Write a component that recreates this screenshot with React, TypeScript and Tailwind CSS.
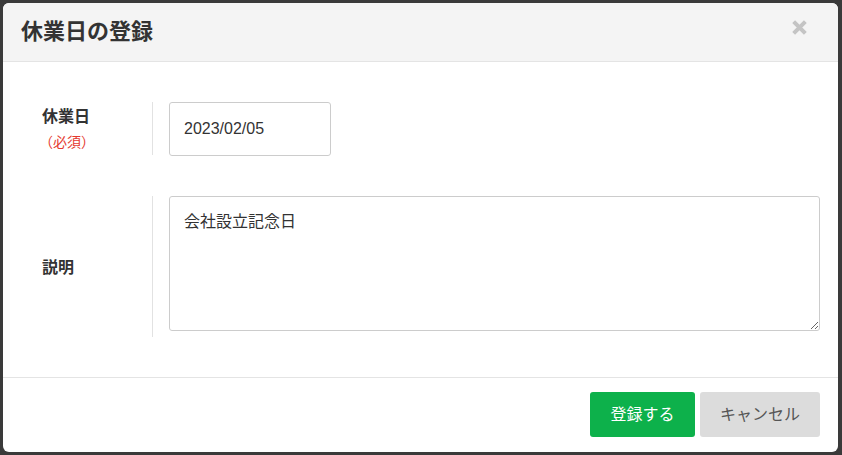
import React from "react";

const font = { fontFamily: '"Liberation Sans", "Noto Sans CJK JP", sans-serif' };

export default function App() {
  return (
    <div
      className="w-[842px] h-[455px] bg-[#3a3a3a] pt-[3px] pl-[3px] overflow-hidden"
      style={font}
    >
      <div className="w-[835px] h-[449px] bg-white rounded-[6px] flex flex-col overflow-hidden">
        <div className="h-[59px] shrink-0 bg-[#f4f4f4] border-b border-[#e4e4e4] flex items-center justify-between pl-[18px] pr-[30px]">
          <h1 className="text-[22px] font-bold text-[#333] leading-none">休業日の登録</h1>
          <svg width="17" height="17" viewBox="0 0 16 16" className="mt-[-10px]">
            <path d="M2.5 2.5 L13.5 13.5 M13.5 2.5 L2.5 13.5" stroke="#c4c4c4" strokeWidth="3.8" />
          </svg>
        </div>

        <div className="flex flex-col pt-[40px] pb-[40px] gap-[41px] border-b border-[#e4e4e4]">
          <div className="flex h-[53px]">
            <div className="w-[149px] shrink-0 flex flex-col justify-center pl-[39px] pt-[1px]">
              <span className="text-[16px] font-bold text-[#333] leading-[22px]">休業日</span>
              <span className="text-[14px] text-[#e53a2f] leading-[20px] ml-[-3px] mt-[4px]">（必須）</span>
            </div>
            <div className="border-l border-[#e2e2e2] pl-[16px]">
              <div className="w-[162px] h-[54px] border border-[#cccccc] rounded-[3px] flex items-center pl-[14px] text-[16px] text-[#333]">
                2023/02/05
              </div>
            </div>
          </div>

          <div className="flex h-[141px]">
            <div className="w-[149px] shrink-0 flex items-center pl-[39px] pt-[2px]">
              <span className="text-[16px] font-bold text-[#333] leading-[22px]">説明</span>
            </div>
            <div className="border-l border-[#e2e2e2] pl-[16px] flex-1 pr-[18px]">
              <textarea
                className="block w-full h-[135px] border border-[#cccccc] rounded-[3px] px-[14px] pt-[13px] text-[16px] leading-[24px] text-[#333] outline-none"
                style={font}
                defaultValue="会社設立記念日"
              />
            </div>
          </div>
        </div>

        <div className="flex justify-end gap-[5px] pt-[14px] pr-[18px]">
          <button className="w-[105px] h-[45px] bg-[#0db14b] rounded-[3px] text-white text-[16px]">
            登録する
          </button>
          <button className="w-[120px] h-[45px] bg-[#dcdcdc] rounded-[3px] text-[#555] text-[16px]">
            キャンセル
          </button>
        </div>
      </div>
    </div>
  );
}
